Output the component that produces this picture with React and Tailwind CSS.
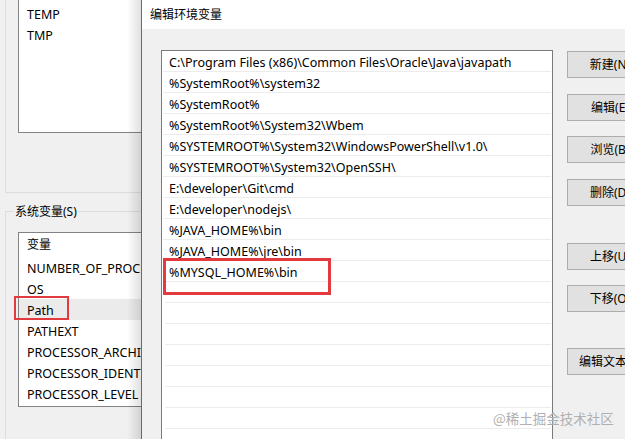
export default function App() {
  const font = { fontFamily: '"Noto Sans", "Noto Sans CJK SC", sans-serif' };
  const paths = [
    "C:\\Program Files (x86)\\Common Files\\Oracle\\Java\\javapath",
    "%SystemRoot%\\system32",
    "%SystemRoot%",
    "%SystemRoot%\\System32\\Wbem",
    "%SYSTEMROOT%\\System32\\WindowsPowerShell\\v1.0\\",
    "%SYSTEMROOT%\\System32\\OpenSSH\\",
    "E:\\developer\\Git\\cmd",
    "E:\\developer\\nodejs\\",
    "%JAVA_HOME%\\bin",
    "%JAVA_HOME%\\jre\\bin",
    "%MYSQL_HOME%\\bin",
  ];
  const empty = Array.from({ length: 8 });
  const sysVars = [
    "NUMBER_OF_PROCESSORS",
    "OS",
    "Path",
    "PATHEXT",
    "PROCESSOR_ARCHITECTURE",
    "PROCESSOR_IDENTIFIER",
    "PROCESSOR_LEVEL",
  ];
  const buttons = [
    { t: "新建(N)", mt: "mt-0" },
    { t: "编辑(E)", mt: "mt-[16px]" },
    { t: "浏览(B)", mt: "mt-[15px]" },
    { t: "删除(D)", mt: "mt-[16px]" },
    { t: "上移(U)", mt: "mt-[37px]" },
    { t: "下移(O)", mt: "mt-[15px]" },
    { t: "编辑文本(T)", mt: "mt-[36px]" },
  ];
  return (
    <div
      className="relative w-[625px] h-[439px] overflow-hidden bg-[#f0f0f0] flex text-[12px] text-black leading-none"
      style={font}
    >
      {/* background window */}
      <div className="relative w-[141px] shrink-0 overflow-hidden">
        <div className="w-[300px]">
          {/* user variables group */}
          <div className="ml-[5px] h-[193px] border-l border-b border-[#dcdcdc]">
            <div className="ml-[12px] h-[133px] bg-white border-l border-b border-[#828282] pt-[4px] text-[12.5px]">
              <div className="h-[21px] flex items-center pl-[8px] pt-[2px]">TEMP</div>
              <div className="h-[21px] flex items-center pl-[8px] pt-[2px]">TMP</div>
            </div>
          </div>
          {/* system variables group */}
          <div className="ml-[5px] mt-[18px] h-[240px] border-l border-t border-[#dcdcdc]">
            <div className="-mt-[8px] ml-[8px] w-fit bg-[#f0f0f0] px-[1px] h-[16px] leading-[16px]">
              系统变量(S)
            </div>
            <div className="ml-[12px] mt-[12px] h-[175px] bg-white border border-[#828282] text-[12.5px]">
              <div className="h-[24px] flex items-center pl-[8px] text-[12px]">变量</div>
              {sysVars.map((v) => (
                <div
                  key={v}
                  className={
                    "relative h-[21px] flex items-center pl-[8px] pt-[3px] whitespace-nowrap " +
                    (v === "Path" ? "bg-[#ebebeb]" : "")
                  }
                >
                  {v}
                  {v === "Path" && (
                    <div className="absolute -left-[5px] -top-[3px] w-[55px] h-[24px] border-2 border-[#e23a3f]" />
                  )}
                </div>
              ))}
            </div>
          </div>
        </div>
        {/* dialog drop shadow */}
        <div className="absolute right-0 top-0 h-full w-[14px] bg-gradient-to-r from-transparent to-[rgba(0,0,0,0.12)]" />
      </div>

      {/* edit environment variable dialog */}
      <div className="flex-1 flex flex-col border-l border-[#6b6b6b] min-w-0">
        <div className="h-[29px] bg-white flex items-center pl-[8px] shrink-0">编辑环境变量</div>
        <div className="flex-1 flex pt-[21px] pl-[19px]">
          <div className="w-[392px] shrink-0 bg-white border-l border-t border-r border-[#7a7a7a] px-[1px] text-[12.5px]">
            {paths.map((p, i) => (
              <div
                key={i}
                className="relative h-[21px] flex items-center pl-[6px] pt-[4px] border-b border-[#ececec] whitespace-nowrap"
              >
                {p}
                {i === paths.length - 1 && (
                  <div className="absolute left-0 -top-[3px] w-[168px] h-[37px] border-[3px] border-[#e23a3f]" />
                )}
              </div>
            ))}
            {empty.map((_, i) => (
              <div key={"e" + i} className="h-[21px] ml-[2px] border-b border-[#ececec]" />
            ))}
          </div>
          <div className="ml-[14px] mt-[1px] flex flex-col">
            {buttons.map((b) => (
              <div
                key={b.t}
                className={
                  b.mt +
                  " w-[86px] h-[27px] shrink-0 bg-[#e1e1e1] border border-[#adadad] flex items-center justify-center whitespace-nowrap"
                }
              >
                {b.t}
              </div>
            ))}
          </div>
        </div>
      </div>

      {/* watermark */}
      <div
        className="absolute left-[493px] top-[412px] text-[13.5px] text-[#b0b0b0] leading-none whitespace-nowrap"
        style={{ fontFamily: '"Noto Sans CJK SC", sans-serif' }}
      >
        @稀土掘金技术社区
      </div>
    </div>
  );
}
